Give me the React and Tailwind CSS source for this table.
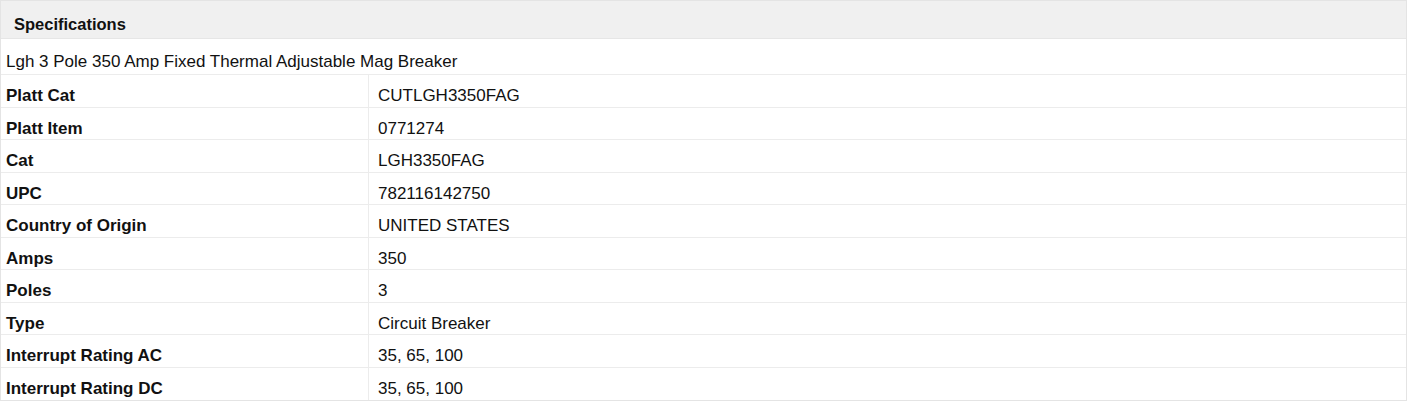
const specs = [
  ["Platt Cat", "CUTLGH3350FAG"],
  ["Platt Item", "0771274"],
  ["Cat", "LGH3350FAG"],
  ["UPC", "782116142750"],
  ["Country of Origin", "UNITED STATES"],
  ["Amps", "350"],
  ["Poles", "3"],
  ["Type", "Circuit Breaker"],
  ["Interrupt Rating AC", "35, 65, 100"],
  ["Interrupt Rating DC", "35, 65, 100"],
];

export default function App() {
  return (
    <div className="w-[1408px] h-[409px] bg-white font-['Liberation_Sans',Arial,sans-serif] text-[#111]">
      <div className="w-[1407px] border border-[#e4e4e4]">
        {/* header */}
        <div className="h-[38px] bg-[#f0f0f0] border-b border-[#e6e6e6] flex items-center pt-[10px] pl-[13px] text-[16.5px] font-bold">
          Specifications
        </div>
        <div className="h-[36px] border-b border-[#ececec] flex items-center pt-[10px] pl-[5px] text-[17px]">
          Lgh 3 Pole 350 Amp Fixed Thermal Adjustable Mag Breaker
        </div>
        {specs.map(([label, value]) => (
          <div key={label} className="flex h-[32.5px] border-b border-[#ececec] last:border-b-0 text-[17px]">
            <div className="w-[368px] border-r border-[#ececec] flex items-center pt-[10px] pl-[5px] font-bold">
              {label}
            </div>
            <div className="flex-1 flex items-center pt-[10px] pl-[9px]">{value}</div>
          </div>
        ))}
      </div>
    </div>
  );
}
